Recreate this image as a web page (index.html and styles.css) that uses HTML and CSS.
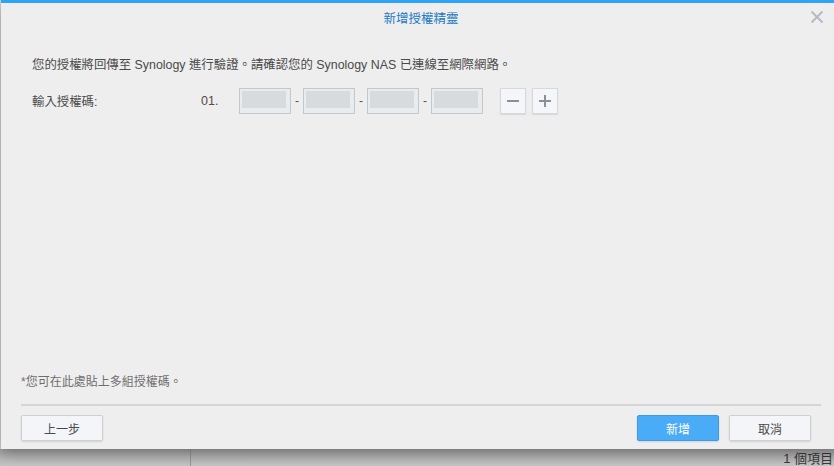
FILE: index.html
```html
<!DOCTYPE html>
<html lang="zh-Hant">
<head>
<meta charset="utf-8">
<title>新增授權精靈</title>
<link rel="stylesheet" href="styles.css">
</head>
<body>
<div class="app">
  <div class="app-main">
    <div class="app-side"></div>
    <div class="app-content"></div>
  </div>
  <div class="app-status">
    <div class="status-side"></div>
    <div class="status-main"><span class="status-text">1 個項目</span></div>
  </div>

  <div class="dlg">
    <div class="dlg-head">
      <div class="dlg-title">新增授權精靈</div>
      <svg class="dlg-close" width="14" height="14" viewBox="0 0 14 14">
        <path d="M1.5 1.5 L12.5 12.5 M12.5 1.5 L1.5 12.5" stroke="#b3bcc5" stroke-width="2" fill="none"/>
      </svg>
    </div>
    <div class="dlg-body">
      <div class="desc">您的授權將回傳至 Synology 進行驗證。請確認您的 Synology NAS 已連線至網際網路。</div>
      <div class="code-row">
        <div class="code-label">輸入授權碼:</div>
        <div class="code-num">01.</div>
        <div class="code-fields">
          <div class="code-box"><span class="code-mask"></span></div>
          <span class="code-dash">-</span>
          <div class="code-box"><span class="code-mask"></span></div>
          <span class="code-dash">-</span>
          <div class="code-box"><span class="code-mask"></span></div>
          <span class="code-dash">-</span>
          <div class="code-box"><span class="code-mask"></span></div>
        </div>
        <div class="code-tools">
          <div class="icon-btn">
            <svg width="12" height="12" viewBox="0 0 12 12"><path d="M0 6 H12" stroke="#8a9097" stroke-width="2"/></svg>
          </div>
          <div class="icon-btn">
            <svg width="12" height="12" viewBox="0 0 12 12"><path d="M0 6 H12 M6 0 V12" stroke="#8a9097" stroke-width="2"/></svg>
          </div>
        </div>
      </div>
    </div>
    <div class="dlg-foot">
      <div class="note">*您可在此處貼上多組授權碼。</div>
      <div class="sep"></div>
      <div class="btn-row">
        <button class="btn">上一步</button>
        <div class="btn-right">
          <button class="btn btn-primary">新增</button>
          <button class="btn">取消</button>
        </div>
      </div>
    </div>
  </div>
</div>
</body>
</html>
```

FILE: styles.css
```css
* { box-sizing: border-box; }
html, body {
  margin: 0;
  padding: 0;
  width: 834px;
  height: 466px;
  overflow: hidden;
}
body {
  font-family: "Liberation Sans", "Noto Sans CJK TC", sans-serif;
  font-size: 12px;
  color: #4a4a4a;
  background: #bdbdbd;
}
.app {
  position: relative;
  width: 834px;
  height: 466px;
  display: flex;
  flex-direction: column;
}
.app-main {
  flex: 1;
  display: flex;
}
.app-side {
  width: 191px;
  background: #d6d6d6;
  border-right: 1px solid #9c9c9c;
}
.app-content {
  flex: 1;
  background: #dedede;
}
.app-status {
  height: 17px;
  display: flex;
  background: linear-gradient(#a6a6a6, #c6c6c6);
}
.status-side {
  width: 191px;
  border-right: 1px solid #959595;
}
.status-main {
  flex: 1;
  display: flex;
  justify-content: flex-end;
  overflow: hidden;
}
.status-text {
  font-size: 13px;
  line-height: 17px;
  color: #3a3a3a;
  white-space: nowrap;
  margin-right: 1px;
  padding-top: 1px;
}

/* dialog overlay */
.dlg {
  position: absolute;
  left: 1px;
  top: 0;
  width: 840px;
  height: 449px;
  background: #eeeeee;
  border-top: 3px solid #2fa3f6;
  box-shadow: 0 4px 14px rgba(0,0,0,0.35);
  display: flex;
  flex-direction: column;
}
.dlg-head {
  height: 37px;
  padding-top: 8px;
  display: flex;
  justify-content: center;
  position: relative;
}
.dlg-title {
  font-size: 12.5px;
  line-height: 16px;
  color: #1b78c4;
}
.dlg-close {
  position: absolute;
  right: 17px;
  top: 7px;
}
.dlg-body {
  flex: 1;
  padding: 17px 20px 0 31px;
}
.desc {
  font-size: 12.4px;
  line-height: 16px;
  white-space: nowrap;
  color: #4a4a4a;
}
.code-row {
  margin-top: 15px;
  display: flex;
  align-items: center;
  height: 26px;
}
.code-label {
  width: 169px;
  font-size: 12.4px;
  color: #4a4a4a;
}
.code-num {
  width: 38px;
  font-size: 12.5px;
  color: #5a4a3e;
}
.code-fields {
  display: flex;
  align-items: center;
}
.code-box {
  width: 52px;
  height: 26px;
  background: #e9ecef;
  border: 1px solid #c5c8cb;
  padding: 2px 0 0 2px;
}
.code-mask {
  display: block;
  width: 44px;
  height: 17px;
  background: #d8dbde;
}
.code-dash {
  width: 12px;
  text-align: center;
  font-size: 12px;
  color: #555;
}
.code-tools {
  margin-left: 17px;
  display: flex;
  gap: 6px;
}
.icon-btn {
  width: 26px;
  height: 26px;
  background: #f5f6f9;
  border: 1px solid #d6d8db;
  box-shadow: 0 1px 1px rgba(0,0,0,0.08);
  display: flex;
  align-items: center;
  justify-content: center;
}

.dlg-foot {
  padding: 0 20px 8px 20px;
}
.note {
  font-size: 12px;
  line-height: 16px;
  color: #6e6e6e;
}
.sep {
  margin-top: 14px;
  height: 2px;
  background: #d5d5d5;
}
.btn-row {
  margin-top: 9px;
  display: flex;
  justify-content: space-between;
  padding-right: 10px;
}
.btn-right {
  display: flex;
  gap: 10px;
}
.btn {
  width: 82px;
  height: 26px;
  padding: 0;
  font-family: "Liberation Sans", "Noto Sans CJK TC", sans-serif;
  font-size: 12px;
  color: #4a4a4a;
  background: #f4f5f8;
  border: 1px solid #cfd0d2;
  border-radius: 2px;
  box-shadow: 0 1px 2px rgba(0,0,0,0.12);
}
.btn-primary {
  background: #4aabf7;
  border-color: #3b9be8;
  color: #ffffff;
}
```
